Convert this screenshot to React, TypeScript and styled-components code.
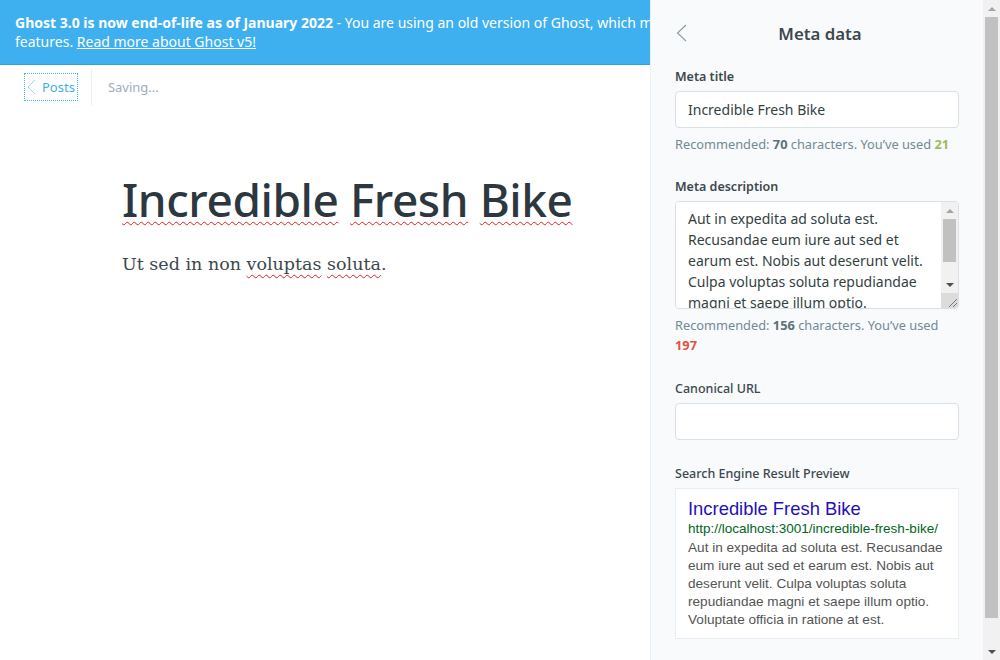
import React from "react";
import styled, { createGlobalStyle } from "styled-components";

const GlobalStyle = createGlobalStyle`
  html, body { margin: 0; padding: 0; }
  body {
    font-family: "Noto Sans", "Open Sans", sans-serif;
    background: #ffffff;
    color: #343f44;
    overflow: hidden;
  }
  * { box-sizing: border-box; }
`;

/* ---------- fake classic scrollbar ---------- */
const ScrollBar = styled.div`
  flex: none;
  width: 17px;
  display: flex;
  flex-direction: column;
  background: #f1f1f1;
`;

const ScrollButton = styled.div`
  flex: none;
  height: 17px;
  display: flex;
  align-items: center;
  justify-content: center;
`;

const ScrollTrack = styled.div`
  flex: 1;
  padding: 0 2px;
  display: flex;
  flex-direction: column;
`;

const ScrollThumb = styled.div<{ $size: number }>`
  flex: none;
  height: ${(p) => p.$size}px;
  background: #c1c1c1;
`;

const Resizer = styled.div`
  flex: none;
  height: 15px;
  background: #dcdcdc;
  display: flex;
  align-items: flex-end;
  justify-content: flex-end;
`;

const Arrow = ({ dir, color }: { dir: "up" | "down"; color: string }) => (
  <svg width="8" height="4" viewBox="0 0 8 4">
    <path d={dir === "up" ? "M0 4L4 0 8 4z" : "M0 0L4 4 8 0z"} fill={color} />
  </svg>
);

const FakeScrollbar = ({ thumb, resizer }: { thumb: number; resizer?: boolean }) => (
  <ScrollBar>
    <ScrollButton>
      <Arrow dir="up" color="#a3a3a3" />
    </ScrollButton>
    <ScrollTrack>
      <ScrollThumb $size={thumb} />
    </ScrollTrack>
    <ScrollButton>
      <Arrow dir="down" color="#505050" />
    </ScrollButton>
    {resizer && (
      <Resizer>
        <svg width="12" height="12" viewBox="0 0 12 12">
          <path d="M11 3L3 11M11 7L7 11" stroke="#777" strokeWidth="1" />
        </svg>
      </Resizer>
    )}
  </ScrollBar>
);

/* ---------- page ---------- */
const Page = styled.div`
  position: relative;
  width: 100%;
  height: 660px;
  overflow: hidden;
  background: #fff;
`;

const Banner = styled.div`
  background: #3eb0ef;
  color: #fff;
  font-size: 14px;
  line-height: 19px;
  padding: 13px 15px 13px;
  height: 65px;
  border-bottom: 1px solid #2fa0e0;
  white-space: nowrap;
`;

const BannerStrong = styled.strong`
  font-weight: 700;
`;

const BannerLink = styled.a`
  color: #fff;
  text-decoration: underline;
`;

const EditorHeader = styled.div`
  display: flex;
  align-items: center;
  height: 44px;
  padding: 0 25px;
`;

const BackLink = styled.a`
  display: flex;
  align-items: center;
  gap: 6px;
  height: 26px;
  padding: 0 2px;
  color: #3eb0ef;
  font-size: 13px;
  outline: 1px dotted #3eb0ef;
  text-decoration: none;
`;

const Divider = styled.div`
  width: 1px;
  height: 36px;
  background: #e5eff5;
  margin: 0 16px 0 14px;
`;

const Status = styled.span`
  color: #9baeb8;
  font-size: 13px;
`;

const EditorBody = styled.div`
  padding: 60px 0 0 122px;
  width: 650px;
`;

const Title = styled.h1`
  margin: 0;
  font-size: 46px;
  line-height: 60px;
  font-weight: 500;
  color: #2c373f;
  letter-spacing: -0.45px;
`;

const Misspelled = styled.span`
  text-decoration: underline wavy #e02020;
  text-decoration-thickness: 1px;
  text-underline-offset: 4px;
`;

const BodyText = styled.p`
  margin: 20px 0 0;
  font-family: "DejaVu Serif", Georgia, serif;
  font-size: 17.5px;
  line-height: 30px;
  color: #3c484e;
`;

/* ---------- settings panel ---------- */
const Panel = styled.aside`
  position: fixed;
  top: 0;
  right: 0;
  bottom: 0;
  width: 350px;
  display: flex;
  background: #f8fafb;
  border-left: 1px solid #e5eff5;
`;

const PanelContent = styled.div`
  flex: 1;
  min-width: 0;
  overflow: hidden;
`;

const PanelHeader = styled.div`
  position: relative;
  display: flex;
  align-items: center;
  justify-content: center;
  height: 66px;
  padding-left: 6px;
`;

const PanelBack = styled.button`
  position: absolute;
  left: 24px;
  top: 24px;
  width: 14px;
  height: 18px;
  padding: 0;
  border: 0;
  background: none;
  display: flex;
`;

const PanelTitle = styled.h4`
  margin: 0;
  font-size: 16.8px;
  font-weight: 600;
  color: #3c484e;
`;

const Form = styled.div`
  padding: 2px 24px 48px;
`;

const Group = styled.div<{ $space: number }>`
  margin-bottom: ${(p) => p.$space}px;
`;

const Label = styled.label<{ $bold?: boolean }>`
  display: block;
  font-size: 12.5px;
  line-height: 18px;
  font-weight: ${(p) => (p.$bold ? 600 : 500)};
  color: #3c484e;
  margin-bottom: 5px;
`;

const TextInput = styled.input`
  display: block;
  width: 100%;
  height: 37px;
  padding: 0 12px;
  border: 1px solid #dae1e6;
  border-radius: 4px;
  background: #fff;
  font-family: inherit;
  font-size: 14px;
  color: #343f44;
  outline: none;
`;

const TextAreaBox = styled.div`
  display: flex;
  height: 108px;
  border: 1px solid #dae1e6;
  border-radius: 4px;
  background: #fff;
  overflow: hidden;
`;

const TextArea = styled.textarea`
  flex: 1;
  min-width: 0;
  display: block;
  padding: 6px 12px;
  border: 0;
  background: #fff;
  font-family: inherit;
  font-size: 14px;
  line-height: 21px;
  color: #343f44;
  outline: none;
  overflow: hidden;
  resize: none;
`;

const Help = styled.p`
  margin: 6px 0 0;
  font-size: 12.8px;
  line-height: 20px;
  color: #738a94;
`;

const Num = styled.b<{ $tone?: "green" | "red" }>`
  font-weight: 700;
  color: ${(p) =>
    p.$tone === "green" ? "#9fbb58" : p.$tone === "red" ? "#e25440" : "#5d7079"};
`;

const Preview = styled.div`
  background: #fff;
  border: 1px solid #e5eff5;
  padding: 9px 12px 9px;
  font-family: "Liberation Sans", Arial, sans-serif;
`;

const PreviewTitle = styled.div`
  font-size: 18.4px;
  line-height: 22px;
  color: #1e0fbe;
`;

const PreviewUrl = styled.div`
  font-size: 13.5px;
  line-height: 17px;
  color: #006621;
`;

const PreviewDesc = styled.div`
  font-size: 13.6px;
  line-height: 18px;
  color: #545454;
  margin-top: 2px;
`;

const description =
  "Aut in expedita ad soluta est. Recusandae eum iure aut sed et earum est. Nobis aut deserunt velit. Culpa voluptas soluta repudiandae magni et saepe illum optio. Voluptate officia in ratione at est.";

export default function App() {
  return (
    <Page>
      <GlobalStyle />
      <Banner>
        <BannerStrong>Ghost 3.0 is now end-of-life as of January 2022</BannerStrong> - You are
        using an old version of Ghost, which means you don't have access to the latest
        <br />
        features. <BannerLink href="#">Read more about Ghost v5!</BannerLink>
      </Banner>
      <EditorHeader>
        <BackLink href="#">
          <svg width="9" height="16" viewBox="0 0 9 16" fill="none">
            <path d="M8 1L1 8l7 7" stroke="#9fd6f5" strokeWidth="1" />
          </svg>
          Posts
        </BackLink>
        <Divider />
        <Status>Saving...</Status>
      </EditorHeader>
      <EditorBody>
        <Title>
          <Misspelled>Incredible</Misspelled> <Misspelled>Fresh</Misspelled>{" "}
          <Misspelled>Bike</Misspelled>
        </Title>
        <BodyText>
          Ut sed in non <Misspelled>voluptas</Misspelled> <Misspelled>soluta</Misspelled>.
        </BodyText>
      </EditorBody>
      <Panel>
        <PanelContent>
          <PanelHeader>
            <PanelBack aria-label="Back">
              <svg width="12" height="18" viewBox="0 0 12 18" fill="none">
                <path d="M11 1L2.5 9 11 17" stroke="#8a9ba3" strokeWidth="1.1" />
              </svg>
            </PanelBack>
            <PanelTitle>Meta data</PanelTitle>
          </PanelHeader>
          <Form>
            <Group $space={24}>
              <Label $bold>Meta title</Label>
              <TextInput defaultValue="Incredible Fresh Bike" spellCheck={false} />
              <Help>
                Recommended: <Num>70</Num> characters. You’ve used <Num $tone="green">21</Num>
              </Help>
            </Group>
            <Group $space={25}>
              <Label $bold>Meta description</Label>
              <TextAreaBox>
                <TextArea defaultValue={description} spellCheck={false} />
                <FakeScrollbar thumb={43} resizer />
              </TextAreaBox>
              <Help>
                Recommended: <Num>156</Num> characters. You’ve used <Num $tone="red">197</Num>
              </Help>
            </Group>
            <Group $space={25}>
              <Label>Canonical URL</Label>
              <TextInput defaultValue="" />
            </Group>
            <Label>Search Engine Result Preview</Label>
            <Preview>
              <PreviewTitle>Incredible Fresh Bike</PreviewTitle>
              <PreviewUrl>http://localhost:3001/incredible-fresh-bike/</PreviewUrl>
              <PreviewDesc>{description}</PreviewDesc>
            </Preview>
          </Form>
        </PanelContent>
        <FakeScrollbar thumb={601} />
      </Panel>
    </Page>
  );
}
